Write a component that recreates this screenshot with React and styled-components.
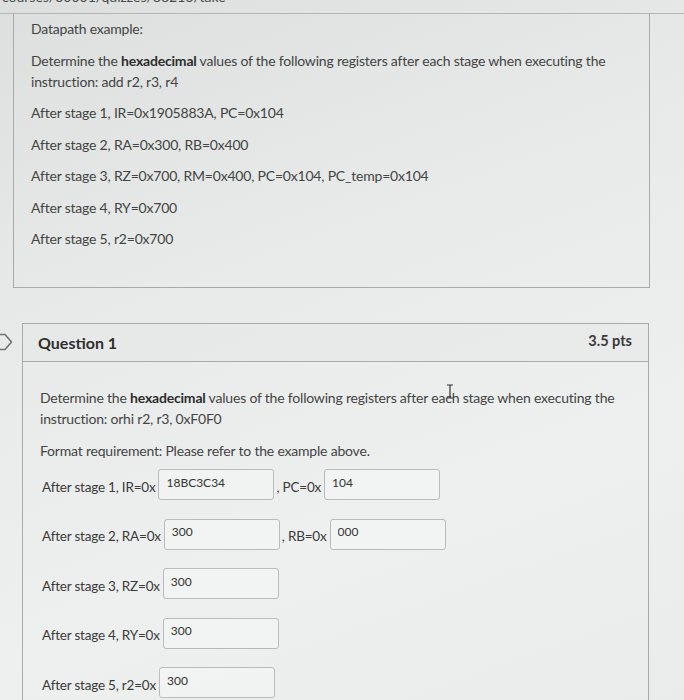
import React from 'react';
import styled, { createGlobalStyle } from 'styled-components';

const GlobalStyle = createGlobalStyle`
  html, body {
    margin: 0;
    padding: 0;
  }
  body {
    width: 684px;
    height: 700px;
    overflow: hidden;
    background: linear-gradient(160deg, #dcdfde 0%, #e7eae9 35%, #eef0ef 70%, #e9ecea 100%);
    font-family: Lato, "Noto Sans", sans-serif;
    color: #3d3d3d;
  }
`;

const examples = [
  'After stage 1, IR=0x1905883A, PC=0x104',
  'After stage 2, RA=0x300, RB=0x400',
  'After stage 3, RZ=0x700, RM=0x400, PC=0x104, PC_temp=0x104',
  'After stage 4, RY=0x700',
  'After stage 5, r2=0x700',
];

const answers = [
  [{ label: 'After stage 1, IR=0x', value: '18BC3C34' }, { label: ', PC=0x', value: '104' }],
  [{ label: 'After stage 2, RA=0x', value: '300' }, { label: ', RB=0x', value: '000' }],
  [{ label: 'After stage 3, RZ=0x', value: '300' }],
  [{ label: 'After stage 4, RY=0x', value: '300' }],
  [{ label: 'After stage 5, r2=0x', value: '300' }],
];

export default function App() {
  return (
    <>
      <GlobalStyle />
      <Page>
        <UrlStrip>
          <UrlText>courses/30001/quizzes/88216/take</UrlText>
        </UrlStrip>
        <Rule />
        <ExamplePanel>
          <Para>Datapath example:</Para>
          <Para>
            Determine the <b>hexadecimal</b> values of the following registers after each stage when executing the instruction: add r2, r3, r4
          </Para>
          {examples.map((line) => (
            <Para key={line}>{line}</Para>
          ))}
        </ExamplePanel>

        <QuestionRow>
          <FlagCol>
            <Flag viewBox="0 0 14 18" width="14" height="18">
              <path d="M-6 1.5 H5 L11.5 9 L5 16.5 H-6" fill="none" stroke="#6f7372" strokeWidth="1.6" strokeLinejoin="round" />
            </Flag>
          </FlagCol>
          <QuestionPanel>
            <QuestionHeader>
              <QuestionTitle>Question 1</QuestionTitle>
              <Points>3.5 pts</Points>
            </QuestionHeader>
            <QuestionBody>
              <Cursor viewBox="0 0 8 15" width="8" height="15">
                <path d="M1 1 H7 M4 1 V14 M1 14 H7" fill="none" stroke="#333" strokeWidth="1.2" />
              </Cursor>
              <Para>
                Determine the <b>hexadecimal</b> values of the following registers after each stage when executing the instruction: orhi r2, r3, 0xF0F0
              </Para>
              <Para>Format requirement: Please refer to the example above.</Para>
              {answers.map((row) => (
                <AnswerRow key={row[0].label}>
                  {row.map((field) => (
                    <Field key={field.label}>
                      <FieldLabel>{field.label}</FieldLabel>
                      <AnswerInput readOnly value={field.value} />
                    </Field>
                  ))}
                </AnswerRow>
              ))}
            </QuestionBody>
          </QuestionPanel>
        </QuestionRow>
      </Page>
    </>
  );
}

const Page = styled.div`
  width: 684px;
`;

const UrlStrip = styled.div`
  height: 13px;
  overflow: hidden;
  padding-left: 2px;
`;

const UrlText = styled.div`
  margin-top: -11px;
  font-size: 14px;
  line-height: 16px;
  color: #4a4a4a;
`;

const Rule = styled.div`
  height: 1px;
  background: #b3b6b5;
`;

const ExamplePanel = styled.div`
  box-sizing: border-box;
  margin-left: 13px;
  width: 637px;
  height: 274px;
  padding: 4px 16px 0 17px;
  border: 1px solid #a8abaa;
  border-top: none;
`;

const Para = styled.p`
  margin: 0 0 10.5px;
  font-size: 14px;
  line-height: 21px;
  letter-spacing: -0.2px;
  color: #444;

  b {
    font-weight: 700;
    color: #2e2e2e;
  }
`;

const QuestionRow = styled.div`
  display: flex;
  align-items: flex-start;
  margin-top: 35px;
`;

const FlagCol = styled.div`
  width: 22px;
  padding-top: 10px;
`;

const Flag = styled.svg`
  display: block;
`;

const QuestionPanel = styled.div`
  box-sizing: border-box;
  width: 627px;
  border: 1px solid #a8abaa;
  border-bottom: none;
  height: 380px;
`;

const QuestionHeader = styled.div`
  display: flex;
  align-items: center;
  justify-content: space-between;
  height: 37px;
  padding: 0 16px 0 15px;
  border-bottom: 1px solid #a8abaa;
  background: rgba(230, 232, 231, 0.5);
`;

const QuestionTitle = styled.div`
  font-size: 16px;
  font-weight: 700;
  color: #2f2f2f;
`;

const Points = styled.div`
  font-size: 14.5px;
  font-weight: 700;
  color: #3a3a3a;
  margin-top: -4px;
`;

const QuestionBody = styled.div`
  position: relative;
  padding: 25px 17px 0 17px;
`;

const Cursor = styled.svg`
  position: absolute;
  top: 22px;
  left: 423px;
`;

const AnswerRow = styled.div`
  display: flex;
  align-items: center;
  margin: 0 0 18.5px 2px;

  &:first-of-type {
    margin-top: -2px;
  }
`;

const Field = styled.div`
  display: flex;
  align-items: center;
`;

const FieldLabel = styled.span`
  font-size: 13.5px;
  letter-spacing: -0.2px;
  color: #3a3a3a;
  margin-right: 3px;
  margin-top: 4px;
`;

const AnswerInput = styled.input`
  box-sizing: border-box;
  width: 116px;
  height: 31px;
  padding: 0 7px 5px;
  border: 1px solid #b9bcbb;
  border-radius: 3px;
  background: rgba(245, 247, 246, 0.6);
  font-family: Lato, "Noto Sans", sans-serif;
  font-size: 12px;
  color: #333;
  outline: none;
  margin-right: 2px;
`;
